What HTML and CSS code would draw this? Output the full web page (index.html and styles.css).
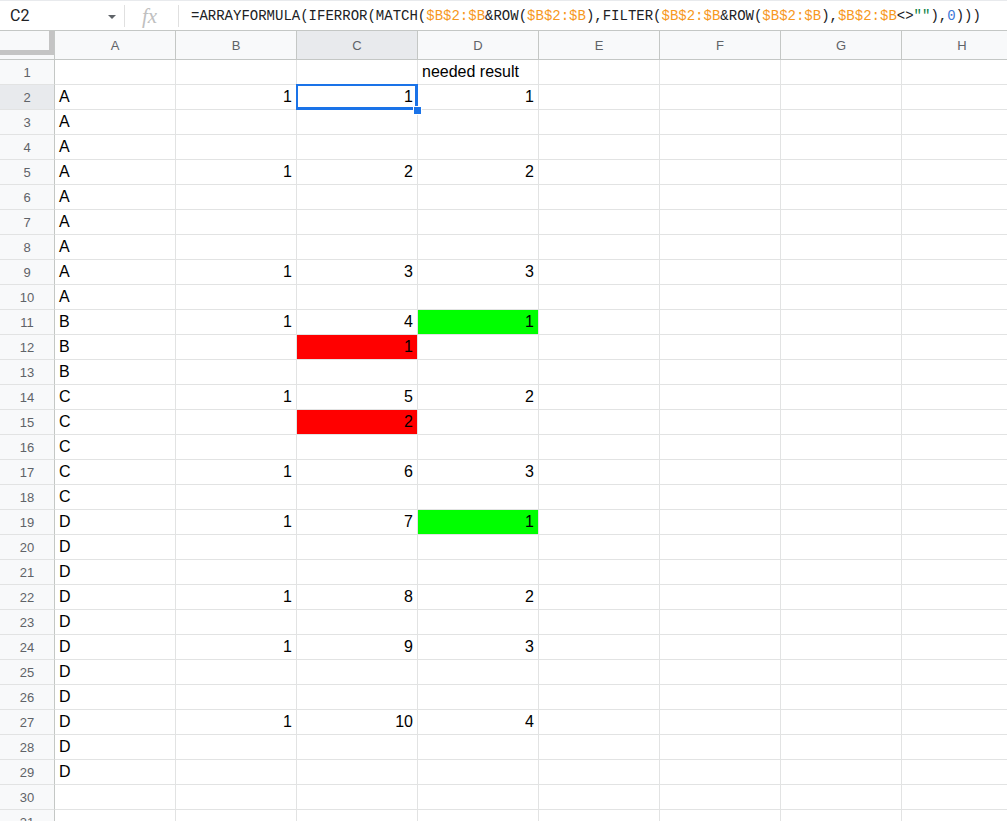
FILE: index.html
```html
<!DOCTYPE html>
<html>
<head>
<meta charset="utf-8">
<link rel="stylesheet" href="styles.css">
</head>
<body>
<div class="fbar">
  <div class="namebox"><span class="ref">C2</span><span class="caret"></span></div>
  <div class="sep"></div>
  <div class="fx">fx</div>
  <div class="sep"></div>
  <div class="formula">=ARRAYFORMULA(IFERROR(MATCH(<span class="rg">$B$2:$B</span>&amp;ROW(<span class="rg">$B$2:$B</span>),FILTER(<span class="rg">$B$2:$B</span>&amp;ROW(<span class="rg">$B$2:$B</span>),<span class="rg">$B$2:$B</span>&lt;&gt;<span class="str">""</span>),<span class="num">0</span>)))</div>
</div>
<div class="sheet">
  <div class="row head">
    <div class="corner"><div class="corner-in"></div></div>
    <div class="ch">A</div><div class="ch">B</div><div class="ch sel">C</div><div class="ch">D</div><div class="ch">E</div><div class="ch">F</div><div class="ch">G</div><div class="ch">H</div>
  </div>
  <div class="row"><div class="rh">1</div><div class="c"></div><div class="c"></div><div class="c"></div><div class="c">needed result</div><div class="c"></div><div class="c"></div><div class="c"></div><div class="c"></div></div>
  <div class="row"><div class="rh sel">2</div><div class="c">A</div><div class="c n">1</div><div class="c n active">1<span class="handle"></span></div><div class="c n">1</div><div class="c"></div><div class="c"></div><div class="c"></div><div class="c"></div></div>
  <div class="row"><div class="rh">3</div><div class="c">A</div><div class="c"></div><div class="c"></div><div class="c"></div><div class="c"></div><div class="c"></div><div class="c"></div><div class="c"></div></div>
  <div class="row"><div class="rh">4</div><div class="c">A</div><div class="c"></div><div class="c"></div><div class="c"></div><div class="c"></div><div class="c"></div><div class="c"></div><div class="c"></div></div>
  <div class="row"><div class="rh">5</div><div class="c">A</div><div class="c n">1</div><div class="c n">2</div><div class="c n">2</div><div class="c"></div><div class="c"></div><div class="c"></div><div class="c"></div></div>
  <div class="row"><div class="rh">6</div><div class="c">A</div><div class="c"></div><div class="c"></div><div class="c"></div><div class="c"></div><div class="c"></div><div class="c"></div><div class="c"></div></div>
  <div class="row"><div class="rh">7</div><div class="c">A</div><div class="c"></div><div class="c"></div><div class="c"></div><div class="c"></div><div class="c"></div><div class="c"></div><div class="c"></div></div>
  <div class="row"><div class="rh">8</div><div class="c">A</div><div class="c"></div><div class="c"></div><div class="c"></div><div class="c"></div><div class="c"></div><div class="c"></div><div class="c"></div></div>
  <div class="row"><div class="rh">9</div><div class="c">A</div><div class="c n">1</div><div class="c n">3</div><div class="c n">3</div><div class="c"></div><div class="c"></div><div class="c"></div><div class="c"></div></div>
  <div class="row"><div class="rh">10</div><div class="c">A</div><div class="c"></div><div class="c"></div><div class="c"></div><div class="c"></div><div class="c"></div><div class="c"></div><div class="c"></div></div>
  <div class="row"><div class="rh">11</div><div class="c">B</div><div class="c n">1</div><div class="c n">4</div><div class="c n green">1</div><div class="c"></div><div class="c"></div><div class="c"></div><div class="c"></div></div>
  <div class="row"><div class="rh">12</div><div class="c">B</div><div class="c"></div><div class="c n red">1</div><div class="c"></div><div class="c"></div><div class="c"></div><div class="c"></div><div class="c"></div></div>
  <div class="row"><div class="rh">13</div><div class="c">B</div><div class="c"></div><div class="c"></div><div class="c"></div><div class="c"></div><div class="c"></div><div class="c"></div><div class="c"></div></div>
  <div class="row"><div class="rh">14</div><div class="c">C</div><div class="c n">1</div><div class="c n">5</div><div class="c n">2</div><div class="c"></div><div class="c"></div><div class="c"></div><div class="c"></div></div>
  <div class="row"><div class="rh">15</div><div class="c">C</div><div class="c"></div><div class="c n red">2</div><div class="c"></div><div class="c"></div><div class="c"></div><div class="c"></div><div class="c"></div></div>
  <div class="row"><div class="rh">16</div><div class="c">C</div><div class="c"></div><div class="c"></div><div class="c"></div><div class="c"></div><div class="c"></div><div class="c"></div><div class="c"></div></div>
  <div class="row"><div class="rh">17</div><div class="c">C</div><div class="c n">1</div><div class="c n">6</div><div class="c n">3</div><div class="c"></div><div class="c"></div><div class="c"></div><div class="c"></div></div>
  <div class="row"><div class="rh">18</div><div class="c">C</div><div class="c"></div><div class="c"></div><div class="c"></div><div class="c"></div><div class="c"></div><div class="c"></div><div class="c"></div></div>
  <div class="row"><div class="rh">19</div><div class="c">D</div><div class="c n">1</div><div class="c n">7</div><div class="c n green">1</div><div class="c"></div><div class="c"></div><div class="c"></div><div class="c"></div></div>
  <div class="row"><div class="rh">20</div><div class="c">D</div><div class="c"></div><div class="c"></div><div class="c"></div><div class="c"></div><div class="c"></div><div class="c"></div><div class="c"></div></div>
  <div class="row"><div class="rh">21</div><div class="c">D</div><div class="c"></div><div class="c"></div><div class="c"></div><div class="c"></div><div class="c"></div><div class="c"></div><div class="c"></div></div>
  <div class="row"><div class="rh">22</div><div class="c">D</div><div class="c n">1</div><div class="c n">8</div><div class="c n">2</div><div class="c"></div><div class="c"></div><div class="c"></div><div class="c"></div></div>
  <div class="row"><div class="rh">23</div><div class="c">D</div><div class="c"></div><div class="c"></div><div class="c"></div><div class="c"></div><div class="c"></div><div class="c"></div><div class="c"></div></div>
  <div class="row"><div class="rh">24</div><div class="c">D</div><div class="c n">1</div><div class="c n">9</div><div class="c n">3</div><div class="c"></div><div class="c"></div><div class="c"></div><div class="c"></div></div>
  <div class="row"><div class="rh">25</div><div class="c">D</div><div class="c"></div><div class="c"></div><div class="c"></div><div class="c"></div><div class="c"></div><div class="c"></div><div class="c"></div></div>
  <div class="row"><div class="rh">26</div><div class="c">D</div><div class="c"></div><div class="c"></div><div class="c"></div><div class="c"></div><div class="c"></div><div class="c"></div><div class="c"></div></div>
  <div class="row"><div class="rh">27</div><div class="c">D</div><div class="c n">1</div><div class="c n">10</div><div class="c n">4</div><div class="c"></div><div class="c"></div><div class="c"></div><div class="c"></div></div>
  <div class="row"><div class="rh">28</div><div class="c">D</div><div class="c"></div><div class="c"></div><div class="c"></div><div class="c"></div><div class="c"></div><div class="c"></div><div class="c"></div></div>
  <div class="row"><div class="rh">29</div><div class="c">D</div><div class="c"></div><div class="c"></div><div class="c"></div><div class="c"></div><div class="c"></div><div class="c"></div><div class="c"></div></div>
  <div class="row"><div class="rh">30</div><div class="c"></div><div class="c"></div><div class="c"></div><div class="c"></div><div class="c"></div><div class="c"></div><div class="c"></div><div class="c"></div></div>
  <div class="row"><div class="rh">31</div><div class="c"></div><div class="c"></div><div class="c"></div><div class="c"></div><div class="c"></div><div class="c"></div><div class="c"></div><div class="c"></div></div>
</div>
</body>
</html>
```
FILE: styles.css
```css
* { box-sizing: border-box; }
html, body { margin: 0; padding: 0; background: #fff; overflow: hidden; width: 1007px; height: 821px; }
body { font-family: "Liberation Sans", Arial, sans-serif; color: #000; }

.fbar {
  height: 31px;
  display: flex;
  align-items: center;
  border-top: 1px solid #e8eaed;
  border-bottom: 1px solid #c4c7c5;
  background: #fff;
}
.namebox {
  width: 124px;
  display: flex;
  align-items: center;
  justify-content: space-between;
  padding: 0 8px 0 10px;
}
.ref { font-family: Roboto, "Liberation Sans", sans-serif; font-size: 16px; color: #202124; }
.caret {
  width: 0; height: 0;
  border-left: 4px solid transparent;
  border-right: 4px solid transparent;
  border-top: 4px solid #5f6368;
  margin-top: 2px;
}
.sep { width: 1px; height: 22px; background: #e0e0e0; }
.fx {
  width: 53px;
  text-align: center;
  font-family: "Liberation Serif", serif;
  font-style: italic;
  font-size: 21px;
  color: #c0c0c0;
  line-height: 24px;
  padding-right: 4px;
}
.formula {
  padding-left: 12px;
  font-family: "Liberation Mono", "DejaVu Sans Mono", monospace;
  font-size: 14px;
  color: #202124;
  white-space: nowrap;
}
.rg { color: #f7981d; }
.str { color: #0b8043; }
.num { color: #3c78d8; }

.sheet { display: flex; flex-direction: column; }
.row {
  display: grid;
  grid-template-columns: 55px repeat(8, 121px);
  height: 25px;
}
.row.head { height: 29px; }
.corner {
  background: #f8f9fa;
  border-right: 1px solid #c4c7c5;
  border-bottom: 1px solid #c4c7c5;
}
.corner-in {
  width: 54px;
  height: 24px;
  border-right: 5px solid #c4c4c4;
  border-bottom: 5px solid #c4c4c4;
}
.ch {
  background: #f8f9fa;
  border-right: 1px solid #c4c7c5;
  border-bottom: 1px solid #c4c7c5;
  font-family: "Liberation Sans", Arial, sans-serif;
  font-size: 13px;
  color: #5f6368;
  display: flex;
  align-items: center;
  justify-content: center;
  padding-top: 1px;
}
.ch.sel { background: #e8eaed; }
.rh {
  background: #f8f9fa;
  border-right: 1px solid #c4c7c5;
  border-bottom: 1px solid #e2e3e3;
  font-size: 13px;
  color: #5f6368;
  display: flex;
  align-items: center;
  justify-content: center;
}
.rh.sel { background: #e8eaed; }
.c {
  position: relative;
  border-right: 1px solid #e2e3e3;
  border-bottom: 1px solid #e2e3e3;
  font-size: 16px;
  line-height: 24px;
  padding: 0 4px;
  white-space: nowrap;
}
.c.n { text-align: right; }
.c.red { background: #ff0000; }
.c.green { background: #00ff00; }
.c.active {
  box-shadow: inset 0 0 0 2px #1a73e8;
  border-right-color: #1a73e8;
  border-bottom-color: #1a73e8;
  margin-left: -1px;
  margin-top: -1px;
  height: 26px;
  line-height: 26px;
  z-index: 1;
}
.handle {
  position: absolute;
  right: -5px;
  bottom: -6px;
  width: 9px;
  height: 9px;
  background: #1a73e8;
  border: 1px solid #fff;
  z-index: 2;
}
```
